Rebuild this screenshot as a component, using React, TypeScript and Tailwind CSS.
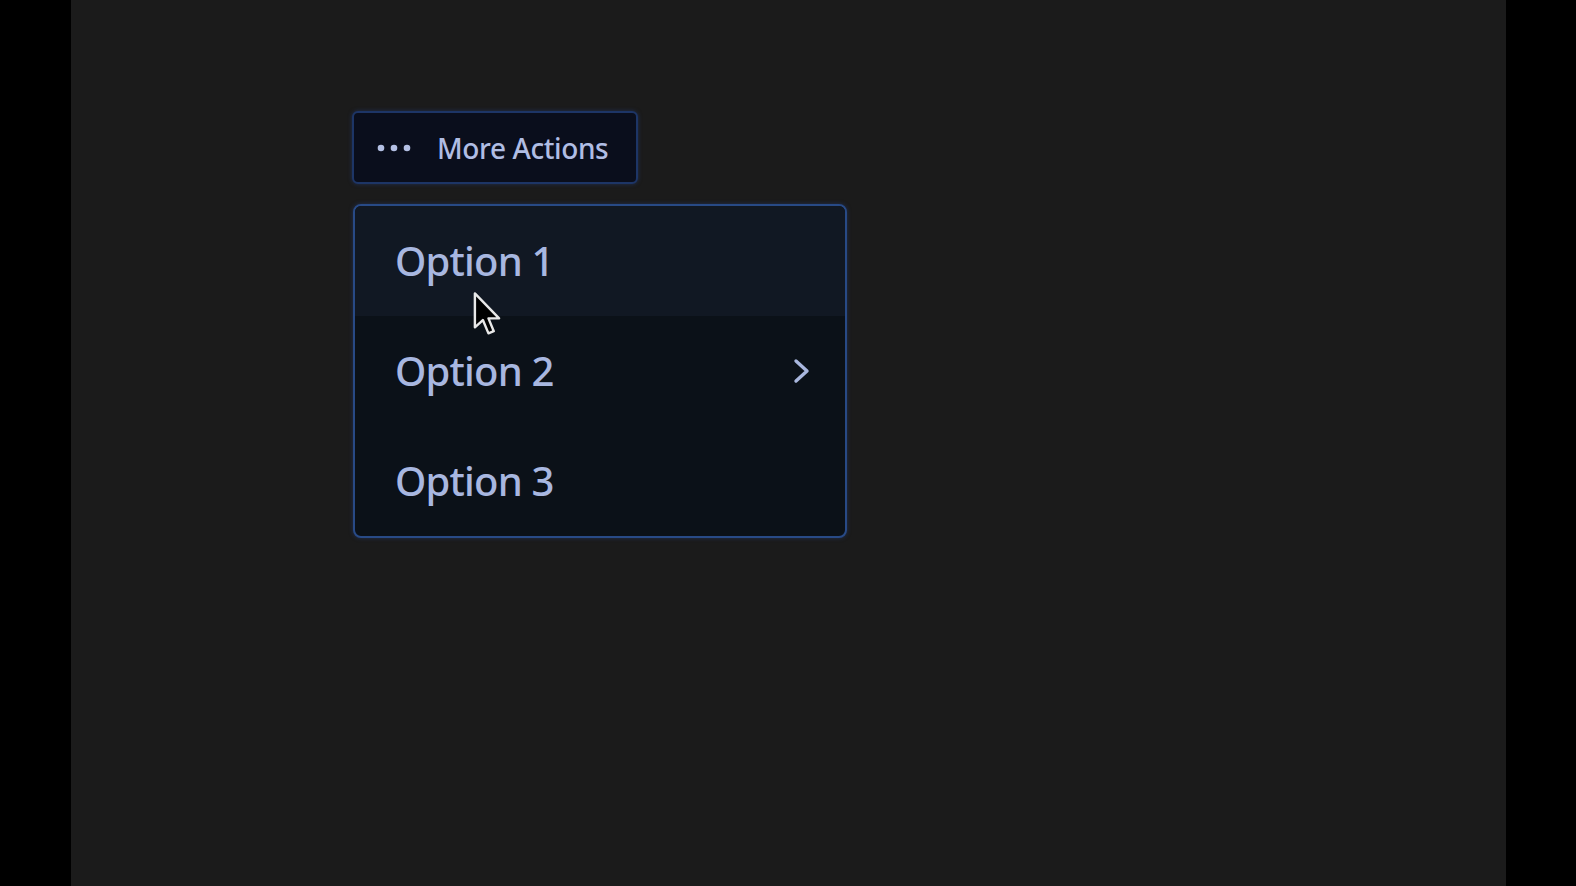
import * as React from 'react'

const OPTIONS = [
    { label: 'Option 1', active: true, sub: false },
    { label: 'Option 2', active: false, sub: true },
    { label: 'Option 3', active: false, sub: false },
]

function Dots() {
    return (
        <svg width="38" height="8" viewBox="0 0 38 8" className="shrink-0">
            <circle cx="4" cy="4" r="3.3" fill="#b4c0e4" />
            <circle cx="17" cy="4" r="3.3" fill="#b4c0e4" />
            <circle cx="30" cy="4" r="3.3" fill="#b4c0e4" />
        </svg>
    )
}

function Chevron() {
    return (
        <svg width="18" height="28" viewBox="0 0 18 28" fill="none">
            <path d="M3 4 L14 14 L3 24" stroke="#a9b7de" strokeWidth="3.4" strokeLinecap="round" strokeLinejoin="round" />
        </svg>
    )
}

// mouse pointer sitting over the first row
function Cursor() {
    return (
        <svg width="30" height="46" viewBox="0 0 12 19" className="absolute left-[117px] top-[85px] pointer-events-none">
            <path
                d="M1 1 L1 15 L4.3 12 L6.6 17.5 L8.8 16.6 L6.6 11.3 L11 11.3 Z"
                fill="#000"
                stroke="#e8e8e8"
                strokeWidth="1"
                strokeLinejoin="round"
            />
        </svg>
    )
}

export default function App() {
    return (
        <div className="flex h-screen w-full bg-black" style={{ fontFamily: '"Noto Sans", "Open Sans", sans-serif' }}>
            <div className="w-[71px] shrink-0 bg-black" />
            <div className="flex-1 bg-[#1b1b1b] pl-[281px] pt-[111px]">
                <button className="flex h-[73px] w-[286px] items-center gap-[22px] rounded-[6px] border-2 border-[#1d3566] bg-[#0a0e1c] pl-[23px] text-[28px] font-medium text-[#b0bde4] shadow-[0_0_4px_rgba(40,70,140,0.5)]">
                    <Dots />
                    <span className="tracking-[-0.4px]">More Actions</span>
                </button>

                <div className="relative mt-[20px] ml-[1px] w-[494px] overflow-hidden rounded-[8px] border-2 border-[#284a86] bg-[#0b1118] shadow-[0_0_4px_rgba(40,70,140,0.5)]">
                    {OPTIONS.map((opt) => (
                        <div
                            key={opt.label}
                            className={`flex h-[110px] items-center justify-between pl-[40px] pr-[34px] text-[40px] font-medium text-[#a8b7e0] ${
                                opt.active ? 'bg-[#111823]' : ''
                            }`}
                        >
                            <span className="tracking-[-0.8px]">{opt.label}</span>
                            {opt.sub && <Chevron />}
                        </div>
                    ))}
                    <Cursor />
                </div>
            </div>
            <div className="w-[70px] shrink-0 bg-black" />
        </div>
    )
}
